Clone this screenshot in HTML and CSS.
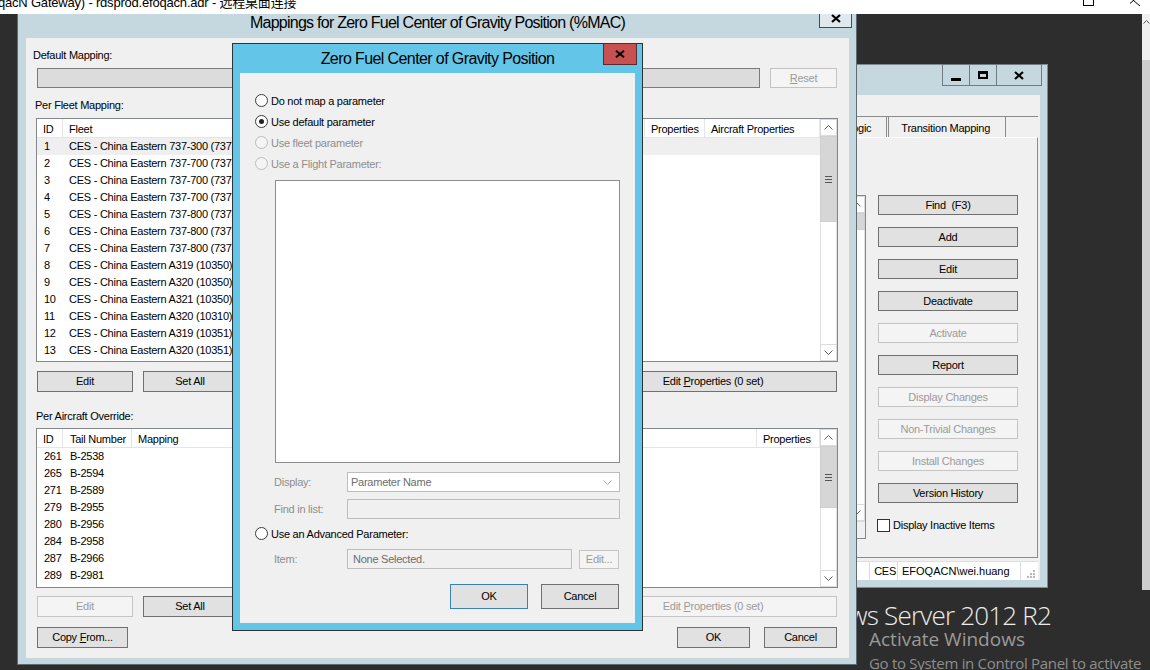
FILE: index.html
```html
<!DOCTYPE html>
<html>
<head>
<meta charset="utf-8">
<title>Mappings</title>
<link rel="stylesheet" href="styles.css">
</head>
<body>
<div class="screen">
  <div class="rdbar">
    <span class="rdtitle">qacN Gateway) - rdsprod.efoqacn.adr - 远程桌面连接</span>
    <svg class="rd-max" width="12" height="6" viewBox="0 0 12 6"><rect x="0.5" y="-6" width="10" height="11.5" fill="none" stroke="#000"/></svg>
    <svg class="rd-close" width="12" height="6" viewBox="0 0 12 6"><path d="M-3 -5 L10 6 M10 -5 L-3 6" fill="none" stroke="#000"/></svg>
  </div>

  <div class="wm-big">Windows Server 2012 R2</div>
  <div class="wm-act">Activate Windows</div>
  <div class="wm-go">Go to System in Control Panel to activate</div>

  <div class="vscroll">
    <div class="vs-top"><svg width="7" height="4" viewBox="0 0 7 4"><path d="M0.5 3.5 L3.5 0.5 L6.5 3.5" fill="none" stroke="#555"/></svg></div>
    <div class="vs-thumb"></div>
  </div>

  <!-- Window behind -->
  <div class="win win-back">
    <div class="cap-btns">
      <div class="cb cb-min"><span class="bar"></span></div>
      <div class="cb cb-max"><span class="box"></span></div>
      <div class="cb cb-close"><svg width="10" height="9" viewBox="0 0 10 9"><path d="M1 1 L9 8 M9 1 L1 8" stroke="#000" stroke-width="2.2"/></svg></div>
    </div>
    <div class="bclient">
      <div class="tabctl">
        <div class="tabs">
          <div class="tab">Mapping Logic</div>
          <div class="tab">Transition Mapping</div>
        </div>
        <div class="tabpage">
          <div class="rlist">
            <div class="rlist-main">
              <div class="rlist-body"></div>
              <div class="sb">
                <div class="sb-btn"><svg width="9" height="5" viewBox="0 0 9 5"><path d="M0.5 4.5 L4.5 0.5 L8.5 4.5" fill="none" stroke="#606060"/></svg></div>
                <div class="sb-thumb rthumb"></div>
                <div class="sb-track"></div>
                <div class="sb-btn"><svg width="9" height="5" viewBox="0 0 9 5"><path d="M0.5 0.5 L4.5 4.5 L8.5 0.5" fill="none" stroke="#606060"/></svg></div>
              </div>
            </div>
            <div class="rlist-h"></div>
          </div>
          <div class="bcol">
            <button class="btn rb-btn">Find  (F3)</button>
            <button class="btn rb-btn">Add</button>
            <button class="btn rb-btn">Edit</button>
            <button class="btn rb-btn">Deactivate</button>
            <button class="btn rb-btn dis">Activate</button>
            <button class="btn rb-btn">Report</button>
            <button class="btn rb-btn dis">Display Changes</button>
            <button class="btn rb-btn dis">Non-Trivial Changes</button>
            <button class="btn rb-btn dis">Install Changes</button>
            <button class="btn rb-btn">Version History</button>
            <label class="chk"><span class="chkbox"></span>Display Inactive Items</label>
          </div>
        </div>
      </div>
      <div class="status">
        <div class="st-fill"></div>
        <div class="st-pane st-ces">CES</div>
        <div class="st-pane st-user">EFOQACN\wei.huang</div>
        <div class="st-grip"><svg width="12" height="12" viewBox="0 0 12 12"><g fill="#b8b8b8"><rect x="9" y="3" width="2" height="2"/><rect x="6" y="6" width="2" height="2"/><rect x="9" y="6" width="2" height="2"/><rect x="3" y="9" width="2" height="2"/><rect x="6" y="9" width="2" height="2"/><rect x="9" y="9" width="2" height="2"/></g></svg></div>
      </div>
    </div>
  </div>

  <!-- Main window -->
  <div class="win win-main">
    <div class="mcap">
      <span class="mcap-title">Mappings for Zero Fuel Center of Gravity Position (%MAC)</span>
      <div class="mcap-close"><svg width="10" height="9" viewBox="0 0 10 9"><path d="M1 1 L9 8 M9 1 L1 8" stroke="#000" stroke-width="2.2"/></svg></div>
    </div>
    <div class="mclient">
      <div class="lbl lbl-default">Default Mapping:</div>
      <div class="row-default">
        <div class="field-gray"></div>
        <button class="btn dis btn-reset"><u>R</u>eset</button>
      </div>
      <div class="lbl lbl-fleet">Per Fleet Mapping:</div>
      <div class="list fleet">
        <div class="list-body">
          <div class="lhead">
            <div class="hc">ID</div><div class="hc">Fleet</div><div class="hc">Properties</div><div class="hc">Aircraft Properties</div>
          </div>
          <div class="lrow hot"><div class="c-id">1</div><div class="c-tx">CES - China Eastern 737-300 (737-300)</div></div>
          <div class="lrow"><div class="c-id">2</div><div class="c-tx">CES - China Eastern 737-700 (737-700)</div></div>
          <div class="lrow"><div class="c-id">3</div><div class="c-tx">CES - China Eastern 737-700 (737-700)</div></div>
          <div class="lrow"><div class="c-id">4</div><div class="c-tx">CES - China Eastern 737-700 (737-700)</div></div>
          <div class="lrow"><div class="c-id">5</div><div class="c-tx">CES - China Eastern 737-800 (737-800)</div></div>
          <div class="lrow"><div class="c-id">6</div><div class="c-tx">CES - China Eastern 737-800 (737-800)</div></div>
          <div class="lrow"><div class="c-id">7</div><div class="c-tx">CES - China Eastern 737-800 (737-800)</div></div>
          <div class="lrow"><div class="c-id">8</div><div class="c-tx">CES - China Eastern A319 (10350)</div></div>
          <div class="lrow"><div class="c-id">9</div><div class="c-tx">CES - China Eastern A320 (10350)</div></div>
          <div class="lrow"><div class="c-id">10</div><div class="c-tx">CES - China Eastern A321 (10350)</div></div>
          <div class="lrow"><div class="c-id">11</div><div class="c-tx">CES - China Eastern A320 (10310)</div></div>
          <div class="lrow"><div class="c-id">12</div><div class="c-tx">CES - China Eastern A319 (10351)</div></div>
          <div class="lrow"><div class="c-id">13</div><div class="c-tx">CES - China Eastern A320 (10351)</div></div>
        </div>
        <div class="sb">
          <div class="sb-btn"><svg width="9" height="5" viewBox="0 0 9 5"><path d="M0.5 4.5 L4.5 0.5 L8.5 4.5" fill="none" stroke="#606060"/></svg></div>
          <div class="sb-thumb thumb-fleet"><svg width="7" height="7" viewBox="0 0 7 7"><path d="M0 0.5H7M0 3.5H7M0 6.5H7" stroke="#555"/></svg></div>
          <div class="sb-track"></div>
          <div class="sb-btn"><svg width="9" height="5" viewBox="0 0 9 5"><path d="M0.5 0.5 L4.5 4.5 L8.5 0.5" fill="none" stroke="#606060"/></svg></div>
        </div>
      </div>
      <div class="brow brow1">
        <button class="btn b-edit">Edit</button>
        <button class="btn b-setall">Set All</button>
        <button class="btn b-props">Edit <u>P</u>roperties (0 set)</button>
      </div>
      <div class="lbl lbl-air">Per Aircraft Override:</div>
      <div class="list air">
        <div class="list-body">
          <div class="lhead">
            <div class="hc">ID</div><div class="hc hc-tail">Tail Number</div><div class="hc">Mapping</div><div class="hc">Properties</div>
          </div>
          <div class="lrow"><div class="c-id">261</div><div class="c-tx">B-2538</div></div>
          <div class="lrow"><div class="c-id">265</div><div class="c-tx">B-2594</div></div>
          <div class="lrow"><div class="c-id">271</div><div class="c-tx">B-2589</div></div>
          <div class="lrow"><div class="c-id">279</div><div class="c-tx">B-2955</div></div>
          <div class="lrow"><div class="c-id">280</div><div class="c-tx">B-2956</div></div>
          <div class="lrow"><div class="c-id">284</div><div class="c-tx">B-2958</div></div>
          <div class="lrow"><div class="c-id">287</div><div class="c-tx">B-2966</div></div>
          <div class="lrow"><div class="c-id">289</div><div class="c-tx">B-2981</div></div>
        </div>
        <div class="sb">
          <div class="sb-btn"><svg width="9" height="5" viewBox="0 0 9 5"><path d="M0.5 4.5 L4.5 0.5 L8.5 4.5" fill="none" stroke="#606060"/></svg></div>
          <div class="sb-thumb thumb-air"><svg width="7" height="7" viewBox="0 0 7 7"><path d="M0 0.5H7M0 3.5H7M0 6.5H7" stroke="#555"/></svg></div>
          <div class="sb-track"></div>
          <div class="sb-btn"><svg width="9" height="5" viewBox="0 0 9 5"><path d="M0.5 0.5 L4.5 4.5 L8.5 0.5" fill="none" stroke="#606060"/></svg></div>
        </div>
      </div>
      <div class="brow brow2">
        <button class="btn dis b-edit">Edit</button>
        <button class="btn b-setall">Set All</button>
        <button class="btn dis b-props">Edit <u>P</u>roperties (0 set)</button>
      </div>
      <div class="brow brow3">
        <button class="btn b-copy">Copy <u>F</u>rom...</button>
        <button class="btn b-okc">OK</button>
        <button class="btn b-okc">Cancel</button>
      </div>
    </div>
  </div>

  <!-- Popup dialog -->
  <div class="dlg">
    <div class="dcap">
      <span class="dcap-title">Zero Fuel Center of Gravity Position</span>
      <div class="dcap-close"><svg width="10" height="8" viewBox="0 0 10 8"><path d="M1 0.8 L9 7.2 M9 0.8 L1 7.2" stroke="#000" stroke-width="2"/></svg></div>
    </div>
    <div class="dclient">
      <div class="radio"><span class="rbx"></span>Do not map a parameter</div>
      <div class="radio"><span class="rbx on"></span>Use default parameter</div>
      <div class="radio dis"><span class="rbx"></span>Use fleet parameter</div>
      <div class="radio dis"><span class="rbx"></span>Use a Flight Parameter:</div>
      <div class="plist"></div>
      <div class="frow f-display">
        <span class="flbl">Display:</span>
        <div class="select">Parameter Name<svg width="9" height="5" viewBox="0 0 9 5"><path d="M0.5 0.5 L4.5 4.5 L8.5 0.5" fill="none" stroke="#a8a8a8"/></svg></div>
      </div>
      <div class="frow f-find">
        <span class="flbl">Find in list:</span>
        <div class="inp"></div>
      </div>
      <div class="radio r-adv"><span class="rbx"></span>Use an Advanced Parameter:</div>
      <div class="frow f-item">
        <span class="flbl">Item:</span>
        <div class="inp">None Selected.</div>
        <button class="btn dis b-small">Edit...</button>
      </div>
      <div class="dbtns">
        <button class="btn b-ok">OK</button>
        <button class="btn b-cancel">Cancel</button>
      </div>
    </div>
  </div>
</div>
</body>
</html>
```

FILE: styles.css
```css
* { box-sizing: border-box; }
html, body { margin: 0; padding: 0; }
body {
  width: 1150px;
  height: 670px;
  overflow: hidden;
  background: #2d2d2d;
  font-family: "Liberation Sans", Arial, sans-serif;
  font-size: 11px;
  letter-spacing: -0.25px;
  color: #000;
}
button {
  font: inherit;
  letter-spacing: inherit;
  color: inherit;
  margin: 0;
  padding: 0;
}
.screen { position: relative; width: 1150px; height: 670px; overflow: hidden; }

/* Remote desktop title strip */
.rdbar {
  position: relative;
  z-index: 10;
  height: 14px;
  background: #fff;
  overflow: hidden;
}
.rdtitle {
  display: block;
  margin: -4px 0 0 -2px;
  font-family: "Liberation Sans", "Noto Sans CJK SC", sans-serif;
  font-size: 13px;
  line-height: 13px;
  letter-spacing: -0.2px;
  white-space: nowrap;
}
.rd-max { position: absolute; left: 1083px; top: 0; }
.rd-close { position: absolute; left: 1130px; top: 0; }

/* Watermark */
.wm-big, .wm-act, .wm-go {
  position: absolute;
  font-family: "Open Sans", "Noto Sans", sans-serif;
  white-space: nowrap;
  z-index: 1;
}
.wm-big { right: 99px; top: 605px; font-size: 26px; line-height: 20px; font-weight: 300; color: #ececec; letter-spacing: -0.8px; }
.wm-act { left: 869px; top: 632px; font-size: 19px; line-height: 14px; color: #9a9a9a; letter-spacing: 0; }
.wm-go { left: 869px; top: 655px; font-size: 15px; line-height: 16px; color: #8e8e8e; letter-spacing: -0.3px; }

/* Far right scroll strip */
.vscroll {
  position: absolute;
  left: 1142px;
  top: 14px;
  width: 8px;
  height: 576px;
  display: flex;
  flex-direction: column;
  z-index: 2;
}
.vs-top { height: 46px; background: #f0f0f0; display: flex; justify-content: center; padding-top: 6px; }
.vs-thumb { flex: 1; background: #cdcdcd; }

/* Generic windows */
.win { position: absolute; background: #c6d8df; }

/* Buttons */
.btn {
  display: flex;
  align-items: center;
  justify-content: center;
  background: #e1e1e1;
  border: 1px solid #707070;
  white-space: pre;
  line-height: 1;
}
.btn.dis { background: #f4f4f4; border-color: #c4c4c4; color: #9b9b9b; }

/* Scrollbars */
.sb { width: 17px; display: flex; flex-direction: column; }
.sb-btn {
  height: 17px;
  flex: none;
  border: 1px solid #dadada;
  background: #fff;
  display: flex;
  align-items: center;
  justify-content: center;
}
.sb-thumb {
  flex: none;
  background: #d6d6d6;
  border: 1px solid #cfcfcf;
  display: flex;
  align-items: center;
  justify-content: center;
}
.sb-track { flex: 1; background: #fff; border-left: 1px solid #e2e2e2; border-right: 1px solid #e2e2e2; }
.thumb-fleet { height: 86px; }
.thumb-air { height: 62px; }
.rthumb { height: 17px; }

/* ===== Back window ===== */
.win-back {
  left: 600px;
  top: 64px;
  width: 448px;
  height: 524px;
  border: 1px solid #7d8b91;
  padding: 30px 7px 7px 7px;
  display: flex;
  flex-direction: column;
  z-index: 2;
}
.cap-btns { position: absolute; top: -1px; right: 5px; display: flex; height: 22px; }
.cb {
  border: 1px solid #6f7b80;
  border-left-width: 0;
  display: flex;
  align-items: center;
  justify-content: center;
  background: #c6d8df;
}
.cb-min { width: 28px; border-left-width: 1px; }
.cb-max { width: 27px; }
.cb-close { width: 45px; }
.cb-min .bar { width: 10px; height: 3px; background: #000; margin-top: 8px; }
.cb-max .box { width: 10px; height: 8px; border: 2px solid #000; border-top-width: 3px; margin-top: -1px; }
.bclient { flex: 1; background: #f0f0f0; display: flex; flex-direction: column; }
.tabctl {
  margin-top: 21px;
  margin-right: 2px;
  height: 442px;
  border-top: 1px solid #8a8a8a;
  display: flex;
  flex-direction: column;
}
.tabs { height: 20px; display: flex; justify-content: flex-end; gap: 1px; margin-right: 32px; }
.tab {
  padding: 3px 15px 0 12px;
  border-left: 1px solid #8a8a8a;
  border-right: 1px solid #8a8a8a;
  line-height: 17px;
  background: #f0f0f0;
  white-space: nowrap;
}
.tabpage {
  flex: 1;
  border-top: 1px solid #fff;
  border-right: 1px solid #8a8a8a;
  border-bottom: 1px solid #8a8a8a;
  padding: 57px 19px 0 0;
  display: flex;
}
.rlist {
  flex: 1;
  height: 344px;
  border: 1px solid #828790;
  background: #fff;
  display: flex;
  flex-direction: column;
}
.rlist-main { flex: 1; display: flex; }
.rlist-body { flex: 1; }
.rlist-h { height: 17px; background: #f0f0f0; border-top: 1px solid #dadada; }
.bcol { width: 140px; margin-left: 12px; display: flex; flex-direction: column; gap: 12px; }
.rb-btn { height: 20px; }
.chk { display: flex; align-items: center; height: 14px; margin-top: 3px; white-space: nowrap; }
.chkbox { width: 13px; height: 13px; border: 1px solid #333; background: #fff; margin: 0 3px 0 -1px; }
.status {
  margin-top: 3px;
  margin-right: 2px;
  height: 19px;
  background: #fff;
  border-top: 1px solid #dedede;
  display: flex;
  line-height: 18px;
}
.st-fill { flex: 1; }
.st-pane { border-right: 1px solid #dcdcdc; white-space: nowrap; }
.st-ces { padding: 0 1px 0 4px; border-left: 1px solid #dcdcdc; }
.st-user { width: 123px; padding: 0 0 0 4px; letter-spacing: 0; }
.st-grip { width: 17px; display: flex; align-items: flex-end; justify-content: flex-end; padding: 0 2px 1px 0; }

/* ===== Main window ===== */
.win-main {
  left: 17px;
  top: 14px;
  width: 840px;
  height: 651px;
  border: 1px solid #5f6b70;
  border-top: 0;
  padding: 0 7px 6px 8px;
  display: flex;
  flex-direction: column;
  z-index: 3;
}
.mcap { height: 24px; position: relative; text-align: center; }
.mcap-title {
  display: block;
  font-size: 16px;
  line-height: 18px;
  letter-spacing: -0.75px;
  white-space: nowrap;
}
.mcap-close {
  position: absolute;
  right: -3px;
  top: -9px;
  width: 33px;
  height: 23px;
  border: 1px solid #4a4a4a;
  background: #dfe8ec;
  display: flex;
  align-items: center;
  justify-content: center;
  padding-top: 3px;
}
.mclient {
  flex: 1;
  background: #f0f0f0;
  padding: 10px 11px 0 10px;
  display: flex;
  flex-direction: column;
}
.lbl { height: 13px; line-height: 13px; white-space: nowrap; }
.lbl-default { margin: 1px 0 0 -3px; }
.row-default { margin-top: 6px; height: 20px; display: flex; gap: 10px; padding: 0 1px; }
.field-gray { flex: 1; background: #dcdcdc; border: 1px solid #7a7a7a; }
.btn-reset { width: 67px; }
.lbl-fleet { margin: 11px 0 0 -1px; }
.list { border: 1px solid #828790; background: #fff; display: flex; }
.list-body { flex: 1; overflow: hidden; }
.fleet { margin-top: 6px; height: 244px; }
.air { margin-top: 5px; height: 160px; }
.lhead, .lrow { display: grid; }
.fleet .lhead, .fleet .lrow { grid-template-columns: 26px 1fr 60px 115px; }
.air .lhead, .air .lrow { grid-template-columns: 26px 69px 1fr 63px; }
.lhead { height: 19px; border-bottom: 1px solid #e5e5e5; }
.hc {
  padding: 3px 0 0 6px;
  line-height: 15px;
  border-right: 1px solid #e5e5e5;
  white-space: nowrap;
  overflow: hidden;
}
.hc-tail { padding-left: 7px; }
.lrow { height: 17px; line-height: 17px; white-space: nowrap; }
.lrow.hot { background: #efefef; }
.c-id { padding-left: 7px; }
.c-tx { padding-left: 6px; overflow: hidden; }
.air .c-tx { padding-left: 7px; }
.brow { display: flex; height: 21px; padding: 0 1px; }
.brow1 { margin-top: 9px; }
.brow2 { margin-top: 8px; }
.brow3 { margin-top: 10px; gap: 14px; }
.b-edit { width: 96px; }
.b-setall { width: 94px; margin-left: 10px; }
.b-props { width: 248px; margin-left: auto; }
.lbl-air { margin-top: 18px; }
.b-copy { width: 91px; margin-right: auto; }
.b-okc { width: 73px; }

/* ===== Popup dialog ===== */
.dlg {
  position: absolute;
  left: 232px;
  top: 43px;
  width: 411px;
  height: 588px;
  background: #63c6e9;
  border: 1px solid #2b3338;
  padding: 0 7px 7px 7px;
  display: flex;
  flex-direction: column;
  z-index: 5;
}
.dcap { height: 29px; text-align: center; }
.dcap-title {
  display: block;
  padding-top: 1px;
  font-size: 16px;
  line-height: 28px;
  letter-spacing: -0.6px;
  white-space: nowrap;
}
.dcap-close {
  position: absolute;
  right: 5px;
  top: -1px;
  width: 34px;
  height: 22px;
  background: #c75050;
  border: 1px solid #5b2a2a;
  display: flex;
  align-items: center;
  justify-content: center;
}
.dclient {
  flex: 1;
  background: #f0f0f0;
  padding: 17px 15px 0 15px;
  display: flex;
  flex-direction: column;
}
.radio { height: 21px; display: flex; align-items: center; white-space: nowrap; }
.radio.dis { color: #8e8e8e; }
.rbx {
  width: 13px;
  height: 13px;
  border-radius: 50%;
  border: 1px solid #3c3c3c;
  background: #fff;
  margin-right: 3px;
  display: flex;
  align-items: center;
  justify-content: center;
  flex: none;
}
.radio.dis .rbx { border-color: #bcbcbc; background: #f4f4f4; }
.rbx.on::after { content: ""; width: 5px; height: 5px; border-radius: 50%; background: #222; }
.plist { margin: 6px 0 0 20px; height: 283px; background: #fff; border: 1px solid #8c8c8c; }
.frow { display: grid; margin-left: 19px; height: 20px; align-items: center; }
.f-display { grid-template-columns: 73px 1fr; margin-top: 9px; }
.f-find { grid-template-columns: 73px 1fr; margin-top: 7px; }
.f-item { grid-template-columns: 73px 225px 47px; margin-top: 5px; }
.flbl { color: #8e8e8e; white-space: nowrap; }
.select {
  height: 20px;
  background: #fff;
  border: 1px solid #bdbdbd;
  color: #6d6d6d;
  display: flex;
  align-items: center;
  justify-content: space-between;
  padding: 0 7px 0 3px;
}
.inp {
  height: 20px;
  background: #f0f0f0;
  border: 1px solid #bdbdbd;
  color: #6d6d6d;
  line-height: 18px;
  padding-left: 5px;
  white-space: nowrap;
}
.b-small { height: 19px; width: 40px; justify-self: end; background: #f4f4f4; }
.r-adv { margin-top: 4px; }
.dbtns { margin: 15px 1px 0 0; display: flex; justify-content: flex-end; gap: 13px; }
.b-ok, .b-cancel { width: 78px; height: 25px; }
.b-ok { border-color: #3c7fb1; }
```
